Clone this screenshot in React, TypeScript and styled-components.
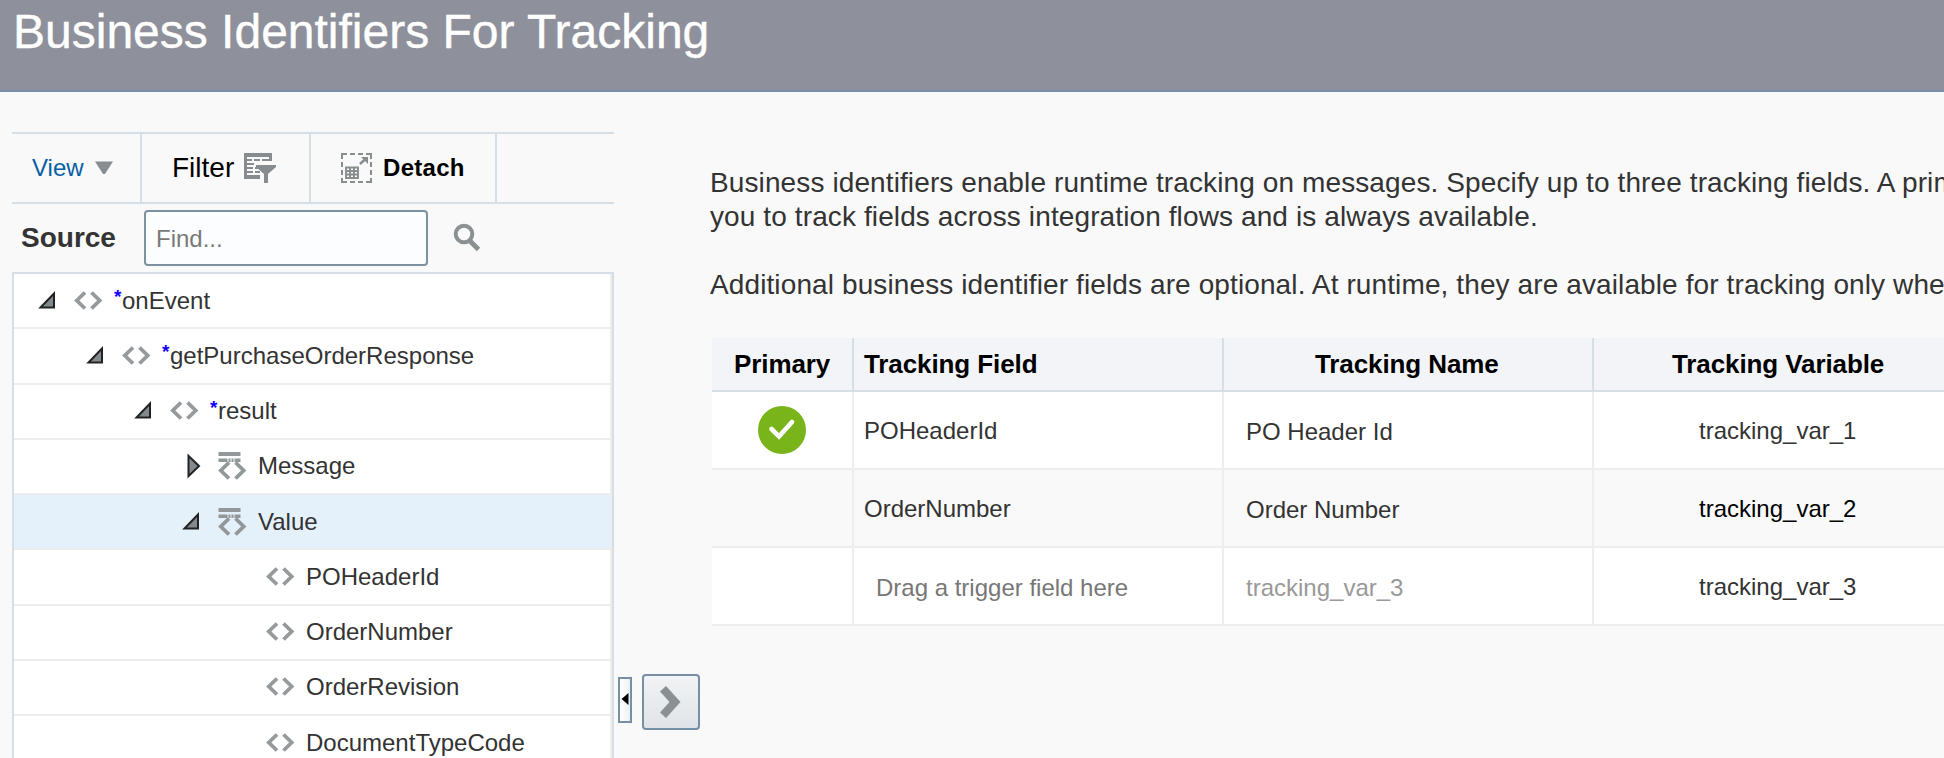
import React from 'react';
import styled, { createGlobalStyle } from 'styled-components';

const GlobalStyle = createGlobalStyle`
  *, *::before, *::after { box-sizing: border-box; }
  body {
    margin: 0;
    background: #f9f9f9;
    color: #333;
    font-family: "Liberation Sans", Arial, sans-serif;
    font-size: 24px;
    overflow: hidden;
  }
  svg { display: block; flex: none; }
`;

const Page = styled.div`
  width: 100%;
  height: 758px;
  display: flex;
  flex-direction: column;
  overflow: hidden;
`;

const Header = styled.header`
  flex: none;
  height: 92px;
  padding: 4px 0 0 13px;
  background: #8e909b;
  border-bottom: 2px solid #758fa6;
`;

const Title = styled.h1`
  margin: 0;
  color: #fff;
  font-size: 48px;
  line-height: 56px;
  font-weight: 400;
  -webkit-text-stroke: 0.4px #fff;
`;

const Body = styled.div`
  flex: 1;
  min-height: 0;
  display: flex;
`;

const SourcePanel = styled.section`
  flex: none;
  width: 614px;
  padding: 40px 0 0 12px;
  display: flex;
  flex-direction: column;
`;

const Toolbar = styled.div`
  flex: none;
  height: 72px;
  display: flex;
  border-top: 2px solid #d6dfe6;
  border-bottom: 2px solid #d6dfe6;
`;

const ToolButton = styled.button<{ $width: number; $left: number; $gap: number }>`
  width: ${(p) => p.$width}px;
  padding: 0 0 0 ${(p) => p.$left}px;
  display: flex;
  align-items: center;
  gap: ${(p) => p.$gap}px;
  border: 0;
  border-right: 2px solid #d6dfe6;
  background: none;
  font: inherit;
  color: #000;
`;

const ViewLabel = styled.span`
  color: #0560a3;
`;

const FilterLabel = styled.span`
  font-size: 28px;
`;

const DetachLabel = styled.span`
  font-weight: 700;
  letter-spacing: 0.3px;
`;

const SearchBar = styled.div`
  flex: none;
  height: 68px;
  padding-left: 9px;
  display: flex;
  align-items: center;
`;

const SourceLabel = styled.label`
  width: 123px;
  font-size: 28px;
  font-weight: 700;
`;

const FindInput = styled.input`
  width: 284px;
  height: 56px;
  margin: 0 25px 0 0;
  padding: 2px 0 0 10px;
  border: 2px solid #7c929e;
  border-radius: 4px;
  background: #fcfdff;
  font: inherit;
  outline: 0;
  &::placeholder { color: #797979; opacity: 1; }
`;

const Tree = styled.ul`
  flex: none;
  height: 520px;
  margin: 0;
  padding: 0;
  list-style: none;
  background: #fff;
  border: 2px solid #d6dfe6;
`;

const TreeRow = styled.li<{ $depth: number; $selected?: boolean }>`
  height: 55.25px;
  padding-left: ${(p) => 12 + p.$depth * 48}px;
  display: flex;
  align-items: center;
  border-bottom: 2px solid #ededed;
  border-right: 2px solid #ededed;
  background: ${(p) => (p.$selected ? '#e4f0fa' : '#fff')};
`;

const Toggle = styled.span`
  flex: none;
  width: 48px;
  padding-left: 12px;
`;

const NodeIcon = styled.span`
  flex: none;
  width: 40px;
`;

const Required = styled.sup`
  align-self: flex-start;
  width: 8px;
  margin-top: 11px;
  color: #1400ff;
  font-size: 19px;
  font-weight: 700;
  line-height: 24px;
`;

const Splitter = styled.div`
  flex: none;
  width: 96px;
  padding: 582px 0 0 4px;
  display: flex;
  align-items: flex-start;
  gap: 10px;
`;

const CollapseHandle = styled.button`
  width: 14px;
  height: 46px;
  margin-top: 3px;
  padding: 0 1px 2px 0;
  display: flex;
  align-items: center;
  justify-content: center;
  border: 2px solid #758fa6;
  background: linear-gradient(90deg, #fff, #edf0f2);
`;

const MoveButton = styled.button`
  width: 58px;
  height: 56px;
  padding: 0 2px 0 0;
  display: flex;
  align-items: center;
  justify-content: center;
  border: 2px solid #758fa6;
  border-radius: 4px;
  background: linear-gradient(#f1f3f4, #e0e4e8);
`;

const Main = styled.main`
  flex: 1;
  min-width: 0;
  padding-top: 74px;
  overflow: hidden;
`;

const Intro = styled.p`
  margin: 0 0 34px;
  font-size: 28px;
  line-height: 34px;
  letter-spacing: 0.11px;
  white-space: nowrap;
`;

const Table = styled.div`
  width: 1300px;
  margin: 36px 0 0 2px;
`;

const Row = styled.div<{ $alt?: boolean }>`
  display: grid;
  grid-template-columns: 142px 370px 370px 1fr;
  height: 78px;
  border-bottom: 2px solid #ededed;
  background: ${(p) => (p.$alt ? '#f9f9f9' : '#fff')};
`;

const HeadRow = styled(Row)`
  height: 54px;
  border-bottom-color: #d6dfe6;
  background: #f3f4f8;
  color: #000;
  font-size: 26px;
  font-weight: 700;
  letter-spacing: -0.1px;
`;

const Cell = styled.div<{ $left?: number; $top?: number; $color?: string }>`
  display: flex;
  align-items: center;
  justify-content: flex-start;
  padding: ${(p) => p.$top ?? 2}px 0 0 ${(p) => p.$left ?? 10}px;
  border-right: 2px solid #ededed;
  color: ${(p) => p.$color ?? '#333'};
  white-space: nowrap;
`;

const HeadCell = styled(Cell)`
  padding-top: 0;
  border-right-color: #d6dfe6;
  color: #000;
`;

const DownTriangle = () => (
  <svg width="18" height="14" viewBox="0 0 18 14"><path d="M0 .5H18L10 13H8Z" fill="#878d91" /></svg>
);

const FilterIcon = () => (
  <svg width="32" height="30" viewBox="0 0 32 30" fill="#878c90">
    <path d="M0 0H28V8H25V4H3V22H16V26H0Z" />
    <path d="M3 6H8V8H3ZM10 6H16V8H10ZM18 6H25V8H18ZM3 10H10V12H3ZM3 14H9V16H3ZM11 14H14V16H11ZM3 18H9V20H3ZM11 18H16V20H11Z" />
    <path d="M12 12H32V14L24 21V30H20V21L12 14Z" />
  </svg>
);

const DetachIcon = () => (
  <svg width="31" height="30" viewBox="0 0 31 30" fill="none" stroke="#888d90">
    <path d="M1 6V1H6M9 1H14M17 1H22M25 1H30V6M30 9V14M30 17V22M30 25V29H25M22 29H17M14 29H9M6 29H1V25M1 22V17M1 14V9" strokeWidth="2" />
    <path d="M5 14.5H17V25H5ZM5 18H17M5 21.5H17M9 15V25M13 15V25" strokeWidth="1.9" />
    <path d="M19 11L25 5.5" strokeWidth="2.5" />
    <path d="M20 4H27V11L24.5 8.5L22.5 6.5Z" fill="#888d90" stroke="none" />
  </svg>
);

const SearchIcon = () => (
  <svg width="29" height="30" viewBox="0 0 29 30" fill="none" stroke="#8b9092">
    <circle cx="11" cy="11" r="8.3" strokeWidth="4" />
    <path d="M17 18L25.5 26.5" strokeWidth="5" />
  </svg>
);

const ExpandedArrow = () => (
  <svg width="20" height="20" viewBox="0 0 20 20">
    <path d="M2.5 16.5H16V2.5Z" fill="#838a8d" stroke="#222" strokeWidth="2" />
  </svg>
);

const CollapsedArrow = () => (
  <svg width="22" height="26" viewBox="0 0 22 26">
    <path d="M6.5 2.8V23.2L17 13Z" fill="#838a8d" stroke="#222" strokeWidth="2" />
  </svg>
);

const ElementIcon = () => (
  <svg width="29" height="20" viewBox="0 0 29 20" fill="none" stroke="#969a9d" strokeWidth="3.8">
    <path d="M11 1.5L2.8 9.5L11 17.5M17.5 1.5L25.7 9.5L17.5 17.5" />
  </svg>
);

const ComplexIcon = () => (
  <svg width="29" height="30" viewBox="0 0 29 30" fill="none" stroke="#929799">
    <path d="M.5 3H22.5" strokeWidth="4" />
    <path d="M.5 9.3H22.5" strokeWidth="3.6" strokeDasharray="9 1 2 1 2 1 10" />
    <path d="M11 11.5L2.8 19.5L11 27.5M17.5 11.5L25.7 19.5L17.5 27.5" strokeWidth="3.8" />
  </svg>
);

const CheckIcon = () => (
  <svg width="48" height="48" viewBox="0 0 48 48">
    <circle cx="24" cy="24" r="24" fill="#78b41a" />
    <path d="M13.5 23L21 30.5L34 16" fill="none" stroke="#fff" strokeWidth="4.6" strokeLinecap="round" />
  </svg>
);

type TreeNode = {
  name: string;
  depth: number;
  kind: 'element' | 'complex';
  state?: 'open' | 'closed';
  required?: boolean;
  selected?: boolean;
};

const nodes: TreeNode[] = [
  { name: 'onEvent', depth: 0, kind: 'element', state: 'open', required: true },
  { name: 'getPurchaseOrderResponse', depth: 1, kind: 'element', state: 'open', required: true },
  { name: 'result', depth: 2, kind: 'element', state: 'open', required: true },
  { name: 'Message', depth: 3, kind: 'complex', state: 'closed' },
  { name: 'Value', depth: 3, kind: 'complex', state: 'open', selected: true },
  { name: 'POHeaderId', depth: 4, kind: 'element' },
  { name: 'OrderNumber', depth: 4, kind: 'element' },
  { name: 'OrderRevision', depth: 4, kind: 'element' },
  { name: 'DocumentTypeCode', depth: 4, kind: 'element' },
];

export default function App() {
  return (
    <Page>
      <GlobalStyle />
      <Header>
        <Title>Business Identifiers For Tracking</Title>
      </Header>
      <Body>
        <SourcePanel>
          <Toolbar>
            <ToolButton $width={130} $left={20} $gap={11}>
              <ViewLabel>View</ViewLabel>
              <DownTriangle />
            </ToolButton>
            <ToolButton $width={169} $left={30} $gap={10}>
              <FilterLabel>Filter</FilterLabel>
              <FilterIcon />
            </ToolButton>
            <ToolButton $width={186} $left={30} $gap={11}>
              <DetachIcon />
              <DetachLabel>Detach</DetachLabel>
            </ToolButton>
          </Toolbar>
          <SearchBar>
            <SourceLabel htmlFor="find">Source</SourceLabel>
            <FindInput id="find" placeholder="Find..." />
            <SearchIcon />
          </SearchBar>
          <Tree>
            {nodes.map((n) => (
              <TreeRow key={n.name} $depth={n.depth} $selected={n.selected}>
                <Toggle>
                  {n.state === 'open' && <ExpandedArrow />}
                  {n.state === 'closed' && <CollapsedArrow />}
                </Toggle>
                <NodeIcon>{n.kind === 'complex' ? <ComplexIcon /> : <ElementIcon />}</NodeIcon>
                {n.required && <Required>*</Required>}
                <span>{n.name}</span>
              </TreeRow>
            ))}
          </Tree>
        </SourcePanel>
        <Splitter>
          <CollapseHandle aria-label="Collapse">
            <svg width="8" height="12" viewBox="0 0 8 12"><path d="M7.5 0V12L.5 6Z" fill="#000" /></svg>
          </CollapseHandle>
          <MoveButton aria-label="Move">
            <svg width="21" height="32" viewBox="0 0 21 32">
              <path d="M0 5.5L6 0L20.5 16L6 32L0 26.5L9.5 16Z" fill="#8b9092" />
            </svg>
          </MoveButton>
        </Splitter>
        <Main>
          <Intro>
            Business identifiers enable runtime tracking on messages. Specify up to three tracking fields. A prim
            <br />
            you to track fields across integration flows and is always available.
          </Intro>
          <Intro>Additional business identifier fields are optional. At runtime, they are available for tracking only whe</Intro>
          <Table>
            <HeadRow>
              <HeadCell $left={22}>Primary</HeadCell>
              <HeadCell>Tracking Field</HeadCell>
              <HeadCell $left={91}>Tracking Name</HeadCell>
              <HeadCell $left={78}>Tracking Variable</HeadCell>
            </HeadRow>
            <Row>
              <Cell $left={46} $top={0}><CheckIcon /></Cell>
              <Cell>POHeaderId</Cell>
              <Cell $left={22} $top={4}>PO Header Id</Cell>
              <Cell $left={105}>tracking_var_1</Cell>
            </Row>
            <Row $alt>
              <Cell />
              <Cell>OrderNumber</Cell>
              <Cell $left={22} $top={4}>Order Number</Cell>
              <Cell $left={105} $color="#000">tracking_var_2</Cell>
            </Row>
            <Row>
              <Cell />
              <Cell $left={22} $top={4} $color="#777">Drag a trigger field here</Cell>
              <Cell $left={22} $top={4} $color="#999">tracking_var_3</Cell>
              <Cell $left={105}>tracking_var_3</Cell>
            </Row>
          </Table>
        </Main>
      </Body>
    </Page>
  );
}
